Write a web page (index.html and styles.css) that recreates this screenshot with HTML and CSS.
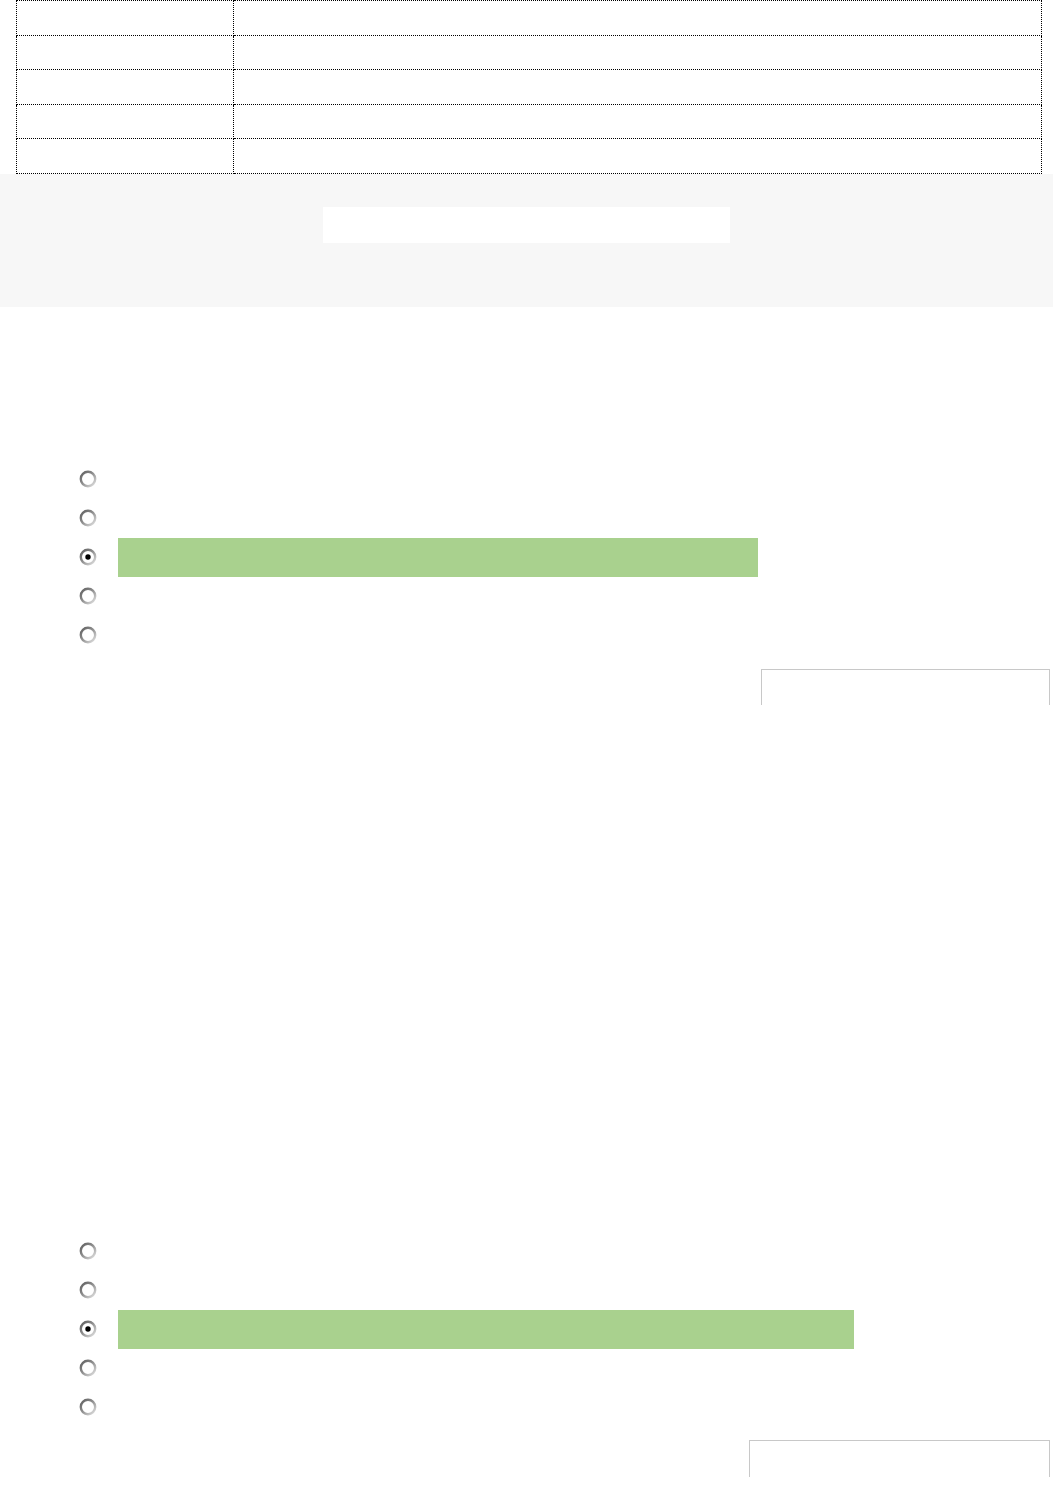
FILE: index.html
```html
<!DOCTYPE html>
<html lang="en">
<head>
<meta charset="utf-8">
<title>Quiz</title>
<link rel="stylesheet" href="styles.css">
</head>
<body>
<table class="info-table">
  <tr><td class="c1"></td><td class="c2"></td></tr>
  <tr><td class="c1"></td><td class="c2"></td></tr>
  <tr><td class="c1"></td><td class="c2"></td></tr>
  <tr><td class="c1"></td><td class="c2"></td></tr>
  <tr><td class="c1"></td><td class="c2"></td></tr>
</table>

<section class="band">
  <div class="band-box"></div>
</section>

<section class="question q1">
  <ul class="options">
    <li class="option"><span class="radio"><svg width="18" height="18" viewBox="0 0 18 18"><defs><linearGradient id="rg1" x1="0" y1="0" x2="1" y2="1"><stop offset="0" stop-color="#5e5e5e"/><stop offset="0.45" stop-color="#8c8c8c"/><stop offset="1" stop-color="#e4e4e4"/></linearGradient></defs><circle cx="9" cy="9" r="7.2" fill="#fff" stroke="url(#rg1)" stroke-width="2.4"/></svg></span><span class="label"></span></li>
    <li class="option"><span class="radio"><svg width="18" height="18" viewBox="0 0 18 18"><circle cx="9" cy="9" r="7.2" fill="#fff" stroke="url(#rg1)" stroke-width="2.4"/></svg></span><span class="label"></span></li>
    <li class="option"><span class="radio"><svg width="18" height="18" viewBox="0 0 18 18"><circle cx="9" cy="9" r="7.2" fill="#fff" stroke="url(#rg1)" stroke-width="2.4"/><circle cx="9" cy="9" r="2.7" fill="#000"/></svg></span><span class="label correct w1"></span></li>
    <li class="option"><span class="radio"><svg width="18" height="18" viewBox="0 0 18 18"><circle cx="9" cy="9" r="7.2" fill="#fff" stroke="url(#rg1)" stroke-width="2.4"/></svg></span><span class="label"></span></li>
    <li class="option"><span class="radio"><svg width="18" height="18" viewBox="0 0 18 18"><circle cx="9" cy="9" r="7.2" fill="#fff" stroke="url(#rg1)" stroke-width="2.4"/></svg></span><span class="label"></span></li>
  </ul>
  <div class="answer-box b1"></div>
</section>

<section class="question q2">
  <ul class="options">
    <li class="option"><span class="radio"><svg width="18" height="18" viewBox="0 0 18 18"><circle cx="9" cy="9" r="7.2" fill="#fff" stroke="url(#rg1)" stroke-width="2.4"/></svg></span><span class="label"></span></li>
    <li class="option"><span class="radio"><svg width="18" height="18" viewBox="0 0 18 18"><circle cx="9" cy="9" r="7.2" fill="#fff" stroke="url(#rg1)" stroke-width="2.4"/></svg></span><span class="label"></span></li>
    <li class="option"><span class="radio"><svg width="18" height="18" viewBox="0 0 18 18"><circle cx="9" cy="9" r="7.2" fill="#fff" stroke="url(#rg1)" stroke-width="2.4"/><circle cx="9" cy="9" r="2.7" fill="#000"/></svg></span><span class="label correct w2"></span></li>
    <li class="option"><span class="radio"><svg width="18" height="18" viewBox="0 0 18 18"><circle cx="9" cy="9" r="7.2" fill="#fff" stroke="url(#rg1)" stroke-width="2.4"/></svg></span><span class="label"></span></li>
    <li class="option"><span class="radio"><svg width="18" height="18" viewBox="0 0 18 18"><circle cx="9" cy="9" r="7.2" fill="#fff" stroke="url(#rg1)" stroke-width="2.4"/></svg></span><span class="label"></span></li>
  </ul>
  <div class="answer-box b2"></div>
</section>
</body>
</html>
```

FILE: styles.css
```css
html, body {
  margin: 0;
  padding: 0;
  background: #ffffff;
  font-family: "Liberation Sans", Arial, sans-serif;
}

.info-table {
  margin-left: 16px;
  width: 1026px;
  height: 174px;
  border-collapse: collapse;
  border: 1px dotted #000;
}

.info-table td {
  border: 1px dotted #000;
  padding: 0;
}

.info-table .c1 {
  width: 216px;
}

.band {
  background: #f7f7f7;
  height: 133px;
  box-sizing: border-box;
  padding-top: 33px;
}

.band-box {
  width: 407px;
  height: 36px;
  margin: 0 auto;
  background: #ffffff;
}

.question {
  display: flex;
  flex-direction: column;
}

.q1 {
  margin-top: 152px;
}

.q2 {
  margin-top: 526px;
}

.options {
  list-style: none;
  margin: 0;
  padding: 0;
}

.option {
  display: flex;
  align-items: center;
  height: 39px;
}

.radio {
  display: block;
  width: 18px;
  height: 18px;
  margin-left: 79px;
}

.radio svg {
  display: block;
}

.label {
  display: block;
  margin-left: 21px;
  height: 39px;
}

.label.correct {
  background: #a9d18e;
  transform: translateY(1px);
}

.w1 { width: 640px; }
.w2 { width: 736px; }

.answer-box {
  border: 1px solid #c8c8c8;
  border-bottom: none;
  box-sizing: border-box;
}

.b1 {
  margin-top: 15px;
  margin-left: 761px;
  width: 289px;
  height: 36px;
}

.b2 {
  margin-top: 14px;
  margin-left: 749px;
  width: 301px;
  height: 37px;
}
```
